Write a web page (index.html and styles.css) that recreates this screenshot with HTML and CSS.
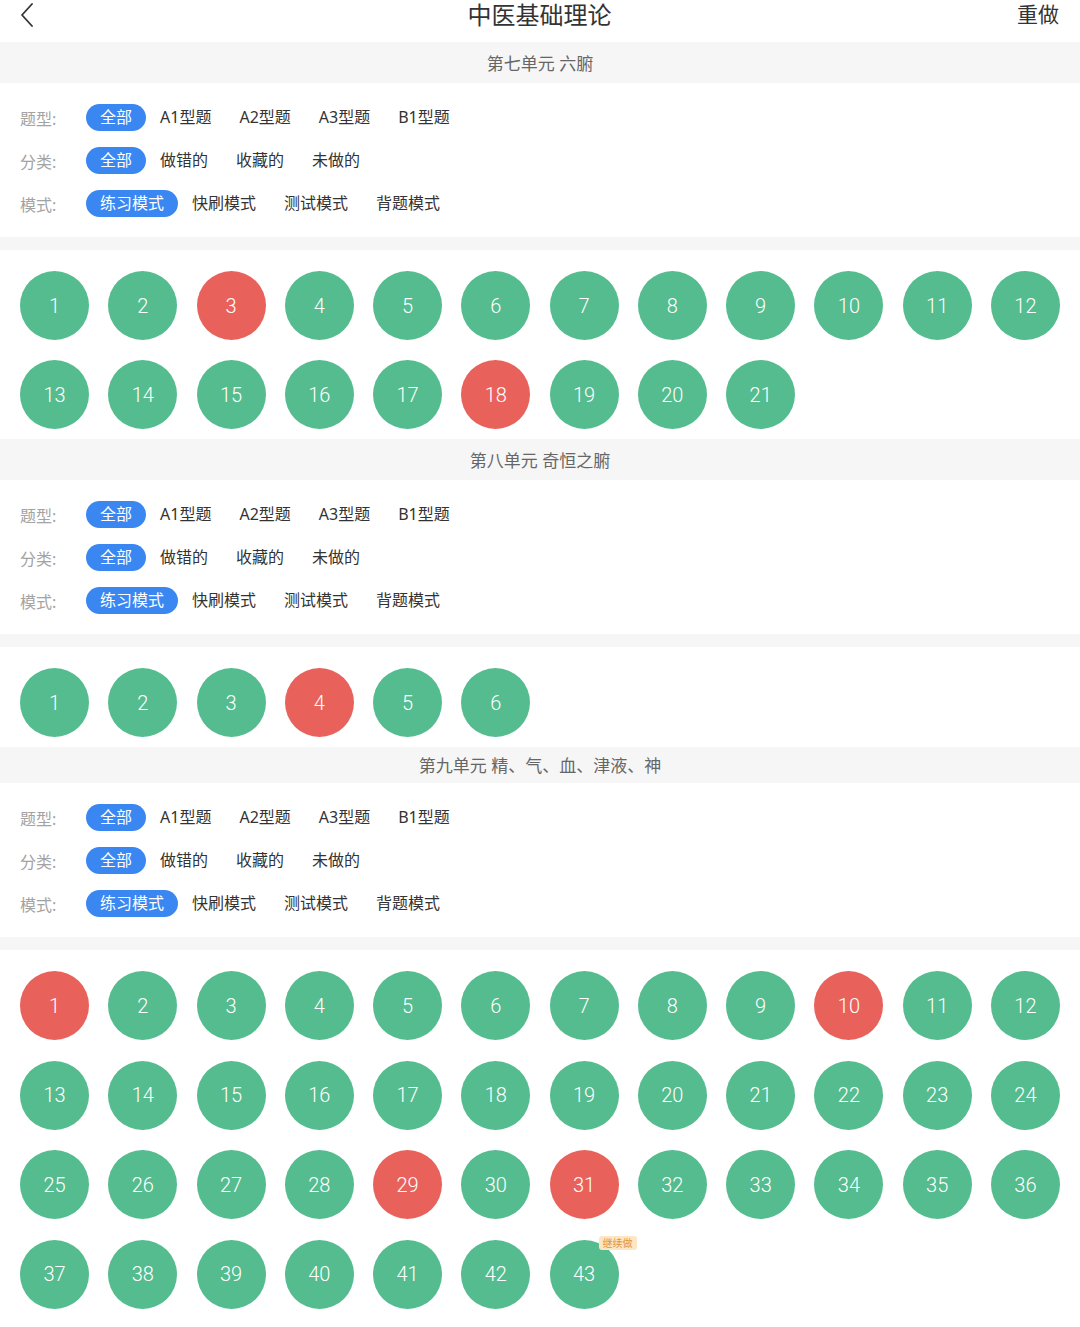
FILE: index.html
```html
<!DOCTYPE html>
<html lang="zh-CN">

<head>
    <meta charset="UTF-8">
    <meta name="viewport" content="width=device-width, initial-scale=1.0">
    <title>中医基础理论</title>
    <link rel="stylesheet" href="styles.css">
</head>

<body>
    <header class="top_bar">
        <div class="back">
            <svg width="14" height="24" viewBox="0 0 14 24">
                <path d="M12 1 L2 12 L12 23" fill="none" stroke="#333" stroke-width="1.8" stroke-linecap="round" stroke-linejoin="round" />
            </svg>
        </div>
        <h1>中医基础理论</h1>
        <div class="redo">重做</div>
    </header>

    <!-- 第七单元 -->
    <section class="unit">
        <div class="unit_title">第七单元 六腑</div>
        <div class="filter">
            <div class="filter_row">
                <span class="label">题型:</span>
                <span class="opt on">全部</span>
                <span class="opt">A1型题</span>
                <span class="opt">A2型题</span>
                <span class="opt">A3型题</span>
                <span class="opt">B1型题</span>
            </div>
            <div class="filter_row">
                <span class="label">分类:</span>
                <span class="opt on">全部</span>
                <span class="opt">做错的</span>
                <span class="opt">收藏的</span>
                <span class="opt">未做的</span>
            </div>
            <div class="filter_row">
                <span class="label">模式:</span>
                <span class="opt on">练习模式</span>
                <span class="opt">快刷模式</span>
                <span class="opt">测试模式</span>
                <span class="opt">背题模式</span>
            </div>
        </div>
        <div class="gap_line"></div>
        <div class="nums">
            <div class="num">1</div>
            <div class="num">2</div>
            <div class="num wrong">3</div>
            <div class="num">4</div>
            <div class="num">5</div>
            <div class="num">6</div>
            <div class="num">7</div>
            <div class="num">8</div>
            <div class="num">9</div>
            <div class="num">10</div>
            <div class="num">11</div>
            <div class="num">12</div>
            <div class="num">13</div>
            <div class="num">14</div>
            <div class="num">15</div>
            <div class="num">16</div>
            <div class="num">17</div>
            <div class="num wrong">18</div>
            <div class="num">19</div>
            <div class="num">20</div>
            <div class="num">21</div>
        </div>
    </section>

    <!-- 第八单元 -->
    <section class="unit">
        <div class="unit_title">第八单元 奇恒之腑</div>
        <div class="filter">
            <div class="filter_row">
                <span class="label">题型:</span>
                <span class="opt on">全部</span>
                <span class="opt">A1型题</span>
                <span class="opt">A2型题</span>
                <span class="opt">A3型题</span>
                <span class="opt">B1型题</span>
            </div>
            <div class="filter_row">
                <span class="label">分类:</span>
                <span class="opt on">全部</span>
                <span class="opt">做错的</span>
                <span class="opt">收藏的</span>
                <span class="opt">未做的</span>
            </div>
            <div class="filter_row">
                <span class="label">模式:</span>
                <span class="opt on">练习模式</span>
                <span class="opt">快刷模式</span>
                <span class="opt">测试模式</span>
                <span class="opt">背题模式</span>
            </div>
        </div>
        <div class="gap_line"></div>
        <div class="nums">
            <div class="num">1</div>
            <div class="num">2</div>
            <div class="num">3</div>
            <div class="num wrong">4</div>
            <div class="num">5</div>
            <div class="num">6</div>
        </div>
    </section>

    <!-- 第九单元 -->
    <section class="unit">
        <div class="unit_title short">第九单元 精、气、血、津液、神</div>
        <div class="filter">
            <div class="filter_row">
                <span class="label">题型:</span>
                <span class="opt on">全部</span>
                <span class="opt">A1型题</span>
                <span class="opt">A2型题</span>
                <span class="opt">A3型题</span>
                <span class="opt">B1型题</span>
            </div>
            <div class="filter_row">
                <span class="label">分类:</span>
                <span class="opt on">全部</span>
                <span class="opt">做错的</span>
                <span class="opt">收藏的</span>
                <span class="opt">未做的</span>
            </div>
            <div class="filter_row">
                <span class="label">模式:</span>
                <span class="opt on">练习模式</span>
                <span class="opt">快刷模式</span>
                <span class="opt">测试模式</span>
                <span class="opt">背题模式</span>
            </div>
        </div>
        <div class="gap_line"></div>
        <div class="nums">
            <div class="num wrong">1</div>
            <div class="num">2</div>
            <div class="num">3</div>
            <div class="num">4</div>
            <div class="num">5</div>
            <div class="num">6</div>
            <div class="num">7</div>
            <div class="num">8</div>
            <div class="num">9</div>
            <div class="num wrong">10</div>
            <div class="num">11</div>
            <div class="num">12</div>
            <div class="num">13</div>
            <div class="num">14</div>
            <div class="num">15</div>
            <div class="num">16</div>
            <div class="num">17</div>
            <div class="num">18</div>
            <div class="num">19</div>
            <div class="num">20</div>
            <div class="num">21</div>
            <div class="num">22</div>
            <div class="num">23</div>
            <div class="num">24</div>
            <div class="num">25</div>
            <div class="num">26</div>
            <div class="num">27</div>
            <div class="num">28</div>
            <div class="num wrong">29</div>
            <div class="num">30</div>
            <div class="num wrong">31</div>
            <div class="num">32</div>
            <div class="num">33</div>
            <div class="num">34</div>
            <div class="num">35</div>
            <div class="num">36</div>
            <div class="num">37</div>
            <div class="num">38</div>
            <div class="num">39</div>
            <div class="num">40</div>
            <div class="num">41</div>
            <div class="num">42</div>
            <div class="num">43<span class="tag">继续做</span></div>
        </div>
    </section>
</body>

</html>
```

FILE: styles.css
```css
* {
    margin: 0;
    padding: 0;
    box-sizing: border-box;
}

body {
    background-color: #fff;
    width: 1080px;
    font-family: "Noto Sans", "Noto Sans CJK SC", sans-serif;
    color: #333;
    overflow-x: hidden;
}

.top_bar {
    height: 42px;
    display: flex;
    align-items: flex-start;
    justify-content: space-between;
    padding: 1px 21px 0 20px;
}

.back {
    width: 60px;
    padding-top: 2px;
    line-height: 0;
}

.top_bar h1 {
    font-size: 24px;
    font-weight: normal;
    line-height: 27px;
    color: #333;
}

.redo {
    width: 60px;
    text-align: right;
    font-size: 21px;
    line-height: 27px;
    color: #333;
}

.unit_title {
    height: 41px;
    background-color: #f6f6f6;
    display: flex;
    align-items: center;
    justify-content: center;
    font-size: 17px;
    color: #666;
}

.unit_title.short {
    height: 36px;
    padding-bottom: 2px;
}

.filter {
    padding: 21px 20px 20px;
    display: flex;
    flex-direction: column;
    gap: 16px;
}

.filter_row {
    display: flex;
    align-items: center;
    height: 27px;
}

.label {
    width: 66px;
    font-size: 16px;
    color: #a3a3a3;
}

.opt {
    height: 27px;
    line-height: 27px;
    padding: 0 14px;
    font-size: 16px;
    color: #333;
    border-radius: 14px;
}

.opt.on {
    background-color: #3b87f2;
    color: #fff;
}

.gap_line {
    height: 13px;
    background-color: #f6f6f6;
}

.nums {
    display: grid;
    grid-template-columns: repeat(12, 69px);
    justify-content: space-between;
    row-gap: 20.4px;
    padding: 21px 20px 10px;
}

.num {
    position: relative;
    width: 69px;
    height: 69px;
    border-radius: 50%;
    background-color: #54bc8e;
    color: #fff;
    font-family: Roboto, "Noto Sans", sans-serif;
    font-weight: 300;
    font-size: 20px;
    display: flex;
    align-items: center;
    justify-content: center;
}

.num.wrong {
    background-color: #e8625b;
}

.tag {
    position: absolute;
    top: -4px;
    right: -18px;
    padding: 0 4px;
    height: 14px;
    line-height: 14px;
    font-size: 10px;
    font-weight: normal;
    color: #e0953f;
    background-color: #fde6c6;
    border-radius: 3px;
    font-family: "Noto Sans CJK SC", sans-serif;
}
```
